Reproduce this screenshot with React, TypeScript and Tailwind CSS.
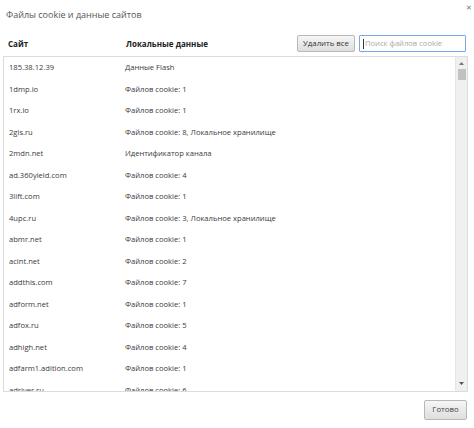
import React from "react";

const rows: [string, string][] = [
  ["185.38.12.39", "Данные Flash"],
  ["1dmp.io", "Файлов cookie: 1"],
  ["1rx.io", "Файлов cookie: 1"],
  ["2gis.ru", "Файлов cookie: 8, Локальное хранилище"],
  ["2mdn.net", "Идентификатор канала"],
  ["ad.360yield.com", "Файлов cookie: 4"],
  ["3lift.com", "Файлов cookie: 1"],
  ["4upc.ru", "Файлов cookie: 3, Локальное хранилище"],
  ["abmr.net", "Файлов cookie: 1"],
  ["acint.net", "Файлов cookie: 2"],
  ["addthis.com", "Файлов cookie: 7"],
  ["adform.net", "Файлов cookie: 1"],
  ["adfox.ru", "Файлов cookie: 5"],
  ["adhigh.net", "Файлов cookie: 4"],
  ["adfarm1.adition.com", "Файлов cookie: 1"],
  ["adriver.ru", "Файлов cookie: 6"],
];

export default function App() {
  return (
    <div
      className="relative w-[474px] h-[428px] bg-white text-[#3a3a3a] overflow-hidden"
      style={{ fontFamily: '"Open Sans", "Noto Sans", sans-serif' }}
    >
      <div className="absolute right-[2px] top-[4px] text-[7px] leading-none text-[#777]">✕</div>
      <div className="pt-[9px] pl-[6px] text-[9px] leading-[12px] text-[#555]">
        Файлы cookie и данные сайтов
      </div>
      <div className="flex items-center mt-[14px] h-[17px] pl-[8px] pr-[8px]">
        <div className="w-[118px] font-bold text-[8px] text-[#222]">Сайт</div>
        <div className="flex-1 font-bold text-[8px] text-[#222]">Локальные данные</div>
        <button className="h-[17px] w-[58px] border border-[#b8b8b8] rounded-[2px] bg-gradient-to-b from-[#f6f6f6] to-[#dedede] text-[7.8px] leading-none text-[#333] whitespace-nowrap">
          Удалить все
        </button>
        <div className="ml-[4px] h-[17px] w-[107px] border border-[#7aa7e6] rounded-[1px] flex items-center pl-[3px] text-[7.6px] text-[#aaa] whitespace-nowrap">
          <span className="w-px h-[10px] bg-[#333] mr-[1px]" />
          Поиск файлов cookie
        </div>
      </div>
      <div className="mt-[4px] ml-[3px] w-[465px] h-[336px] border border-[#dcdcdc] flex overflow-hidden">
        <div className="flex-1 overflow-hidden">
          {rows.map(([site, data], i) => (
            <div key={i} className="flex items-center h-[21.5px] text-[7.6px]">
              <div className="w-[121px] pl-[5px] whitespace-nowrap">{site}</div>
              <div className="whitespace-nowrap">{data}</div>
            </div>
          ))}
        </div>
        <div className="w-[12px] bg-[#f0f0f0] border-l border-[#e6e6e6] flex flex-col items-center">
          <div className="h-[12px] flex items-center justify-center">
            <svg width="5" height="3" viewBox="0 0 5 3"><path d="M0 3 L2.5 0 L5 3Z" fill="#777" /></svg>
          </div>
          <div className="w-[8px] h-[11px] bg-[#c1c1c1]" />
          <div className="flex-1" />
          <div className="h-[12px] flex items-center justify-center mb-[2px]">
            <svg width="5" height="3" viewBox="0 0 5 3"><path d="M0 0 L2.5 3 L5 0Z" fill="#555" /></svg>
          </div>
        </div>
      </div>
      <div className="flex justify-end pr-[7px] mt-[8px]">
        <button className="h-[20px] w-[43px] border border-[#b8b8b8] rounded-[2px] bg-gradient-to-b from-[#f6f6f6] to-[#dedede] text-[7.8px] leading-none text-[#444]">
          Готово
        </button>
      </div>
    </div>
  );
}
